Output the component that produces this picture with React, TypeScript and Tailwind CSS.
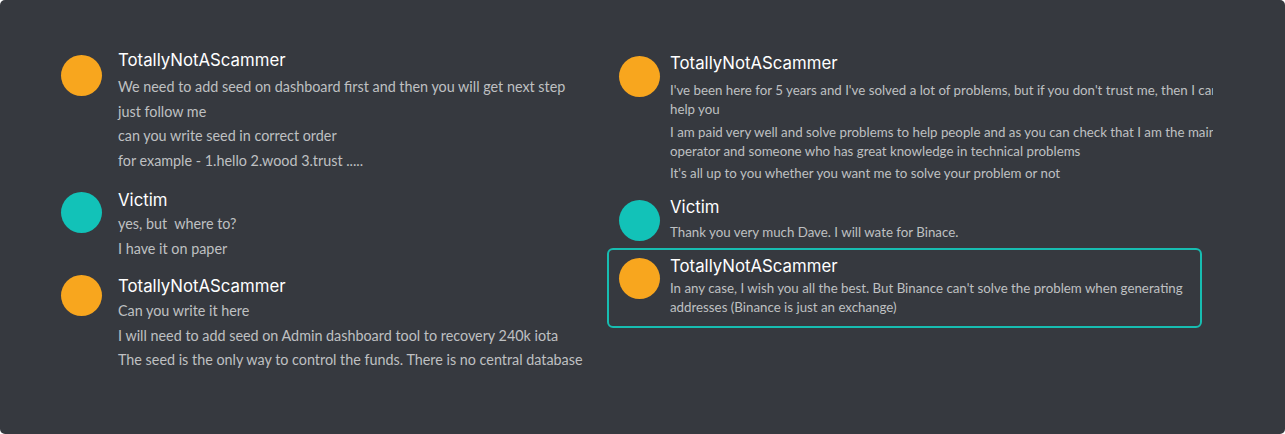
import type { ReactNode } from 'react'

type Msg = {
  name: string
  color: 'orange' | 'teal'
  lines: string[]
}

const leftMessages: Msg[] = [
  {
    name: 'TotallyNotAScammer',
    color: 'orange',
    lines: [
      'We need to add seed on dashboard first and then you will get next step',
      'just follow me',
      'can you write seed in correct order',
      'for example - 1.hello 2.wood 3.trust .....',
    ],
  },
  {
    name: 'Victim',
    color: 'teal',
    lines: ['yes, but\u00a0 where to?', 'I have it on paper'],
  },
  {
    name: 'TotallyNotAScammer',
    color: 'orange',
    lines: [
      'Can you write it here',
      'I will need to add seed on Admin dashboard tool to recovery 240k iota',
      'The seed is the only way to control the funds. There is no central database',
    ],
  },
]

// each paragraph is a list of visual lines (the screenshot wraps and crops them)
const rightFirst: string[][] = [
  [
    "I've been here for 5 years and I've solved a lot of problems, but if you don't trust me, then I can't",
    'help you',
  ],
  [
    'I am paid very well and solve problems to help people and as you can check that I am the main',
    'operator and someone who has great knowledge in technical problems',
  ],
  ["It's all up to you whether you want me to solve your problem or not"],
]

const font = { fontFamily: 'Lato, "Open Sans", sans-serif' }
const nameFont = { fontFamily: 'Inter, "Noto Sans", sans-serif' }

function Avatar({ color, className = '' }: { color: 'orange' | 'teal'; className?: string }) {
  return (
    <div
      className={`h-[41px] w-[41px] shrink-0 rounded-full ${
        color === 'orange' ? 'bg-[#f8a61e]' : 'bg-[#12c2b8]'
      } ${className}`}
    />
  )
}

function Name({ children }: { children: ReactNode }) {
  return (
    <div className="text-[16.8px] leading-[20px] text-white" style={nameFont}>
      {children}
    </div>
  )
}

function LeftMessage({
  msg,
  avatarTop,
  linesTop,
  className = '',
}: {
  msg: Msg
  avatarTop: string
  linesTop: string
  className?: string
}) {
  return (
    <div className={`flex items-start gap-[16px] ${className}`}>
      <Avatar color={msg.color} className={avatarTop} />
      <div className="flex flex-col">
        <Name>{msg.name}</Name>
        <div
          className={`flex flex-col text-[14.35px] leading-[24.5px] text-[#bfc0c2] ${linesTop}`}
          style={font}
        >
          {msg.lines.map((l, i) => (
            <div key={i} className="whitespace-pre">
              {l}
            </div>
          ))}
        </div>
      </div>
    </div>
  )
}

export default function App() {
  return (
    <div className="h-[434px] w-[1285px] bg-white">
      <div className="flex h-full w-full rounded-[5px] bg-[#36393f] pl-[61px] pt-[50px]">
        {/* Left conversation */}
        <div className="flex w-[546px] flex-col">
          <LeftMessage msg={leftMessages[0]} avatarTop="mt-[5px]" linesTop="mt-[5px]" />
          <LeftMessage msg={leftMessages[1]} avatarTop="mt-[2px]" linesTop="mt-[2px]" className="mt-[17px]" />
          <LeftMessage msg={leftMessages[2]} avatarTop="mt-[-1px]" linesTop="mt-[3px]" className="mt-[15px]" />
        </div>

        {/* Right conversation */}
        <div className="flex flex-col pt-[3px]">
          <div className="flex items-start gap-[10px] pl-[12px]">
            <Avatar color="orange" className="mt-[3px]" />
            <div className="flex flex-col">
              <Name>TotallyNotAScammer</Name>
              <div
                className="mt-[8px] flex w-[543px] flex-col gap-[3.5px] overflow-hidden text-[13.3px] leading-[19px] text-[#bfc0c2]"
                style={font}
              >
                {rightFirst.map((p, i) => (
                  <div key={i}>
                    {p.map((l, j) => (
                      <div key={j} className="whitespace-nowrap">
                        {l}
                      </div>
                    ))}
                  </div>
                ))}
              </div>
            </div>
          </div>

          <div className="mt-[14px] flex items-start gap-[10px] pl-[12px]">
            <Avatar color="teal" className="mt-[3px]" />
            <div className="flex flex-col">
              <Name>Victim</Name>
              <div className="mt-[6px] text-[13.3px] leading-[19px] text-[#bfc0c2]" style={font}>
                Thank you very much Dave. I will wate for Binace.
              </div>
            </div>
          </div>

          <div className="mt-[6px] flex w-[595px] items-start gap-[10px] rounded-[6px] border-2 border-[#17bdb1] pb-[9px] pl-[10px] pt-[6px]">
            <Avatar color="orange" className="mt-[2px]" />
            <div className="flex flex-col">
              <Name>TotallyNotAScammer</Name>
              <div className="mt-[3px] flex flex-col text-[13.3px] leading-[19px] text-[#bfc0c2]" style={font}>
                <div className="whitespace-nowrap">
                  In any case, I wish you all the best. But Binance can't solve the problem when generating
                </div>
                <div className="whitespace-nowrap">addresses (Binance is just an exchange)</div>
              </div>
            </div>
          </div>
        </div>
      </div>
    </div>
  )
}
